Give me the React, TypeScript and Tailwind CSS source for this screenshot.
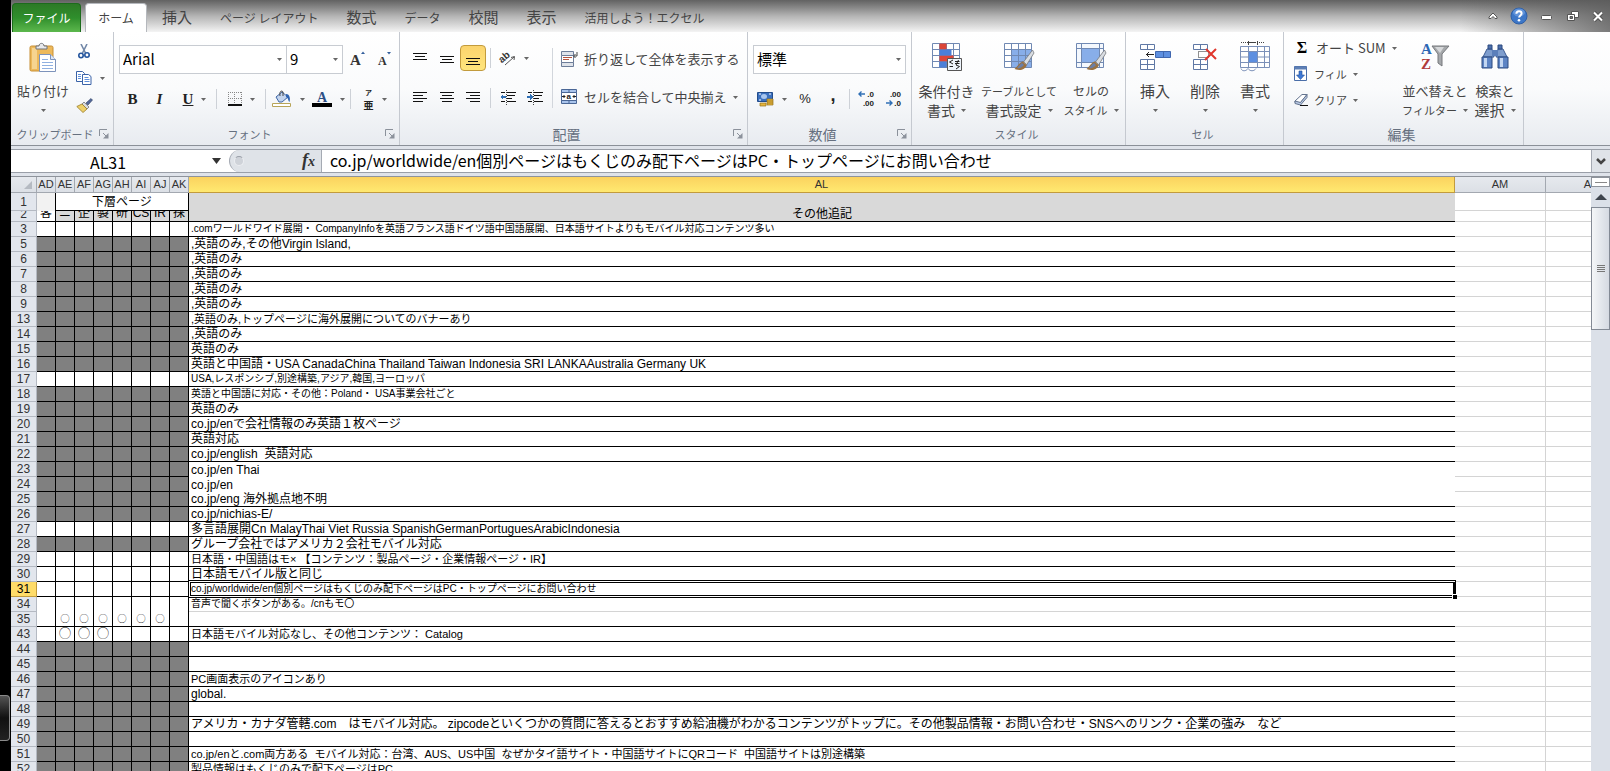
import type { ReactNode } from "react";
import { clsx } from "clsx";

const UI_FONT = "font-['Noto_Sans_CJK_JP',sans-serif]";
const CELL_FONT = "font-['Liberation_Sans','Noto_Sans_CJK_JP',sans-serif]";

type Size = "sm" | "md" | "base";

type Row = {
  n: number;
  text?: string;
  size?: Size;
  filled?: boolean;
  line?: "black" | "gray" | "none";
  marks?: number;
  openCells?: boolean;
};

const TEXT_SIZE: Record<Size, string> = {
  sm: "text-[10px]",
  md: "text-[11px]",
  base: "text-xs",
};

const SMALL_COLUMNS = ["AD", "AE", "AF", "AG", "AH", "AI", "AJ", "AK"];
const SUB_HEADINGS = ["客", "ニ", "企", "製", "研", "CS", "IR", "採"];

const ROWS: Row[] = [
  {
    n: 3,
    text: ".comワールドワイド展開・ CompanyInfoを英語フランス語ドイツ語中国語展開、日本語サイトよりもモバイル対応コンテンツ多い",
    size: "sm",
  },
  { n: 5, text: ",英語のみ,その他Virgin Island,", filled: true },
  { n: 6, text: ",英語のみ", filled: true },
  { n: 7, text: ",英語のみ", filled: true },
  { n: 8, text: ",英語のみ", filled: true },
  { n: 9, text: ",英語のみ", filled: true },
  { n: 13, text: ",英語のみ,トップページに海外展開についてのバナーあり", size: "md", filled: true },
  { n: 14, text: ",英語のみ", filled: true },
  { n: 15, text: "英語のみ", filled: true },
  {
    n: 16,
    text: "英語と中国語・USA CanadaChina Thailand Taiwan Indonesia SRI LANKAAustralia Germany UK",
    filled: true,
  },
  { n: 17, text: "USA,レスポンシブ,別途構築,アジア,韓国,ヨーロッパ", size: "sm" },
  { n: 18, text: "英語と中国語に対応・その他：Poland・ USA事業会社ごと", size: "sm", filled: true },
  { n: 19, text: "英語のみ", filled: true },
  { n: 20, text: "co.jp/enで会社情報のみ英語１枚ページ", filled: true },
  { n: 21, text: "英語対応", filled: true },
  { n: 22, text: "co.jp/english  英語対応", filled: true },
  { n: 23, text: "co.jp/en Thai", filled: true, line: "none" },
  { n: 24, text: "co.jp/en", filled: true, line: "none" },
  { n: 25, text: "co.jp/eng 海外拠点地不明", filled: true },
  { n: 26, text: "co.jp/nichias-E/", filled: true },
  { n: 27, text: "多言語展開Cn MalayThai Viet Russia SpanishGermanPortuguesArabicIndonesia" },
  { n: 28, text: "グループ会社ではアメリカ２会社モバイル対応", filled: true },
  { n: 29, text: "日本語・中国語はモ× 【コンテンツ：製品ページ・企業情報ページ・IR】", size: "md" },
  { n: 30, text: "日本語モバイル版と同じ" },
  {
    n: 31,
    text: "co.jp/worldwide/en個別ページはもくじのみ配下ページはPC・トップページにお問い合わせ",
    size: "sm",
  },
  { n: 34, text: "音声で聞くボタンがある。/cnもモ〇", size: "sm", line: "gray", openCells: true },
  { n: 35, marks: 6 },
  { n: 43, text: "日本語モバイル対応なし、その他コンテンツ： Catalog", size: "md", marks: 3 },
  { n: 44, filled: true },
  { n: 45, filled: true },
  { n: 46, text: "PC画面表示のアイコンあり", size: "md", filled: true },
  { n: 47, text: "global.", filled: true },
  { n: 48, filled: true },
  {
    n: 49,
    text: "アメリカ・カナダ管轄.com　はモバイル対応。 zipcodeといくつかの質問に答えるとおすすめ給油機がわかるコンテンツがトップに。その他製品情報・お問い合わせ・SNSへのリンク・企業の強み　など",
    filled: true,
  },
  { n: 50, filled: true },
  {
    n: 51,
    text: "co.jp/enと.com両方ある  モバイル対応：台湾、AUS、US中国  なぜかタイ語サイト・中国語サイトにQRコード  中国語サイトは別途構築",
    size: "md",
    filled: true,
  },
  { n: 52, text: "製品情報はもくじのみで配下ページはPC", size: "md", filled: true },
];

const SELECTED_ROW = 31;

export default function App() {
  return (
    <div className={clsx("flex h-screen overflow-hidden bg-black text-[#444]", UI_FONT)}>
      <aside className="flex w-[11px] shrink-0 flex-col justify-end pb-[30px]">
        <div className="h-[46px] w-[10px] rounded-r-sm border border-l-0 border-[#8a8a8a] bg-linear-to-b from-[#555] via-[#111] to-[#222]" />
      </aside>
      <div className="flex min-w-0 flex-1 flex-col bg-[#dfe3ea]">
        <TabBar />
        <Ribbon />
        <FormulaBar />
        <div className="flex min-h-0 flex-1 border-t border-[#8e939b]">
          <Sheet />
          <ScrollBar />
        </div>
      </div>
    </div>
  );
}

function TabBar() {
  const tabs = [
    { label: "挿入", kanji: true },
    { label: "ページ レイアウト" },
    { label: "数式", kanji: true },
    { label: "データ" },
    { label: "校閲", kanji: true },
    { label: "表示", kanji: true },
    { label: "活用しよう！エクセル" },
  ];
  return (
    <header className="flex h-8 shrink-0 items-end bg-linear-to-b from-[#626262] via-[#b4b4b4] to-[#f4f4f4]">
      <button className="ml-px h-[29px] w-[69px] rounded-t-sm border border-b-0 border-[#1c6b1c] bg-linear-to-b from-[#2c7a26] via-[#2f8f2c] to-[#5cb84d] text-xs text-white">
        ファイル
      </button>
      <button className="ml-1 h-[29px] w-[62px] rounded-t border border-b-0 border-[#b5b8bd] bg-white text-xs text-[#444]">
        ホーム
      </button>
      <nav className="ml-[15px] flex h-[29px] items-center gap-7">
        {tabs.map((t) => (
          <button
            key={t.label}
            className={clsx("whitespace-nowrap text-[#444]", t.kanji ? "text-[15px]" : "text-xs")}
          >
            {t.label}
          </button>
        ))}
      </nav>
      <div className="ml-auto flex h-full w-[150px] items-center justify-end gap-3 bg-linear-to-r from-transparent to-[#5c5c5c]/80 pr-[6px]">
        <button aria-label="リボンの最小化">
          <svg width="10" height="8" viewBox="0 0 10 8">
            <path d="M1 5 5 1l4 4v1.500H7L5 4.500l-2 2H1z" fill="#fff" stroke="#555" />
          </svg>
        </button>
        <button aria-label="ヘルプ">
          <svg width="18" height="18" viewBox="0 0 18 18">
            <circle cx="9" cy="9" r="8" fill="#3d77c8" stroke="#2f5fa5" />
            <ellipse cx="9" cy="5.500" rx="6" ry="4" fill="#79a7e4" opacity=".6" />
            <path d="M6.400 6.800c0-3.400 5.200-3.200 5.200-.2 0 1.800-2.500 1.900-2.500 4" fill="none" stroke="#fff" strokeWidth="2" />
            <circle cx="9" cy="13.200" r="1.300" fill="#fff" />
          </svg>
        </button>
        <button aria-label="最小化">
          <svg width="14" height="12" viewBox="0 0 14 12">
            <rect x="1.500" y="5.500" width="10" height="4" rx="1" fill="#fff" stroke="#555" />
          </svg>
        </button>
        <button aria-label="元に戻す">
          <svg width="14" height="12" viewBox="0 0 14 12" fill="#fff" stroke="#555">
            <path d="M5.500 1.500h7v6h-7z" />
            <path d="M1.500 4.500h7v6h-7z" />
            <path d="M4 6.500h2.500v2H4z" fill="#777" />
          </svg>
        </button>
        <button aria-label="閉じる">
          <svg width="12" height="11" viewBox="0 0 12 11">
            <path d="m2 1.500 8 8m0-8-8 8" stroke="#555" strokeWidth="4" />
            <path d="m2 1.500 8 8m0-8-8 8" stroke="#fff" strokeWidth="2" />
          </svg>
        </button>
      </div>
    </header>
  );
}

function Caret({ className }: { className?: string }) {
  return (
    <svg width="5" height="3" viewBox="0 0 5 3" className={clsx("shrink-0", className)}>
      <path d="M0 0h5L2.500 3z" fill="#666" />
    </svg>
  );
}

function Divider({ className }: { className?: string }) {
  return <span className={clsx("h-5 w-px shrink-0 bg-[#cdd1d7]", className)} />;
}

function Tool({
  label,
  width,
  caret,
  active,
  children,
}: {
  label: string;
  width: string;
  caret?: boolean;
  active?: boolean;
  children: ReactNode;
}) {
  return (
    <button
      aria-label={label}
      className={clsx(
        "flex h-[26px] shrink-0 items-center justify-center gap-2",
        width,
        active && "rounded-sm border border-[#c29b3d] bg-linear-to-b from-[#fbd46d] to-[#ffe57c]",
      )}
    >
      {children}
      {caret && <Caret />}
    </button>
  );
}

function Group({
  label,
  kana,
  width,
  launcher,
  children,
}: {
  label: string;
  kana?: boolean;
  width: string;
  launcher?: boolean;
  children: ReactNode;
}) {
  return (
    <section className={clsx("flex shrink-0 flex-col border-r border-[#c5c9d0]", width)}>
      <div className="h-[92px]">{children}</div>
      <footer className="flex h-5 items-center pr-1 text-[#66707f]">
        <span
          className={clsx("flex-1 whitespace-nowrap text-center", kana ? "text-[11px]" : "text-sm")}
        >
          {label}
        </span>
        {launcher && (
          <button aria-label={`${label}の設定`}>
            <svg width="10" height="10" viewBox="0 0 10 10" fill="none" stroke="#8b919b">
              <path d="M.5 7V.5H8M4 4l4 4" />
              <path d="M9.500 4v5.500H4z" fill="#8b919b" stroke="none" />
            </svg>
          </button>
        )}
      </footer>
    </section>
  );
}

function Combo({ label, value, className }: { label: string; value: string; className: string }) {
  return (
    <div className={clsx("relative h-[29px] border border-[#c8ccd2] bg-white", className)}>
      <select
        aria-label={label}
        className="h-full w-full appearance-none bg-transparent pl-[3px] text-[15px] text-black"
      >
        <option>{value}</option>
      </select>
      <Caret className="pointer-events-none absolute right-1 top-3" />
    </div>
  );
}

function Lines({ widths, top = 0 }: { widths: [number, number][]; top?: number }) {
  return (
    <svg width="16" height="16" viewBox="0 0 16 16" stroke="#111" shapeRendering="crispEdges">
      {widths.map(([x, w], i) => (
        <path key={i} d={`M${x} ${top + i * 3 + 0.5}h${w}`} />
      ))}
    </svg>
  );
}

const FULL: [number, number][] = [
  [1, 14],
  [3, 10],
  [1, 14],
];

function Indent({ right }: { right?: boolean }) {
  return (
    <svg width="16" height="16" viewBox="0 0 16 16" shapeRendering="crispEdges">
      <path d="M1 2.500h4M7 2.500h9M7 5.500h8M7 8.500h5M1 11.500h4M7 11.500h9" stroke="#111" strokeWidth="1.500" />
      <path d="M6.500 0v15" stroke="#444" strokeDasharray="1 1" />
      <path d={right ? "M3 4v6l3-3zM0 6h3v2H0z" : "M3 4v6L0 7zM3 6h3v2H3z"} fill="#2f6fb5" />
    </svg>
  );
}

function BigButton({
  icon,
  lines,
  width,
}: {
  icon: ReactNode;
  lines: { text: string; size: string }[];
  width: string;
}) {
  const single = lines.length === 1;
  return (
    <button className={clsx("flex shrink-0 flex-col items-center pt-2", width)}>
      <span className="flex h-[34px] items-center">{icon}</span>
      <span className={clsx("mt-[7px] h-5 whitespace-nowrap leading-5", lines[0].size)}>
        {lines[0].text}
      </span>
      {single ? (
        <Caret className="mt-2" />
      ) : (
        <span className={clsx("flex h-[18px] items-center gap-[6px] whitespace-nowrap", lines[1].size)}>
          {lines[1].text}
          <Caret />
        </span>
      )}
    </button>
  );
}

function GridIcon({ children, blue }: { children?: ReactNode; blue?: string }) {
  return (
    <svg width="32" height="32" viewBox="0 0 32 32">
      <path d="M1.500 2.500h27v24h-27z" fill="#fff" />
      {blue && <path d={blue} fill="#88aee9" />}
      <path
        d="M1.500 2.500h27v24h-27zM1.500 8.500h27M1.500 14.500h27M1.500 20.500h27M8.500 2.500v24M15.500 2.500v24M22.500 2.500v24"
        fill="none"
        stroke="#7089b3"
      />
      {children}
    </svg>
  );
}

function Brush() {
  return (
    <g>
      <path d="m29.500 9-9 12 3 3 7.500-12z" fill="#d9dde2" stroke="#76787c" strokeWidth=".8" />
      <path d="m20 20 4 4-2.500 3z" fill="#b9bec6" stroke="#777" strokeWidth=".6" />
      <path d="M19.500 20.500c-3 1-4 4-8 7.500 5 2 11 1 12-4z" fill="#9a7141" />
      <path d="M19 22c-2 1-3 3-5 5 3 .5 5-.5 7-3z" fill="#6a7fa8" />
    </g>
  );
}

function Ribbon() {
  return (
    <div className="flex h-[114px] shrink-0 overflow-hidden border-b border-[#8b9098] bg-linear-to-b from-white via-[#fafbfc] to-[#e8ebf0]">
      <Group label="クリップボード" kana width="w-[103px]" launcher>
        <div className="flex">
          <BigButton
            width="w-16"
            lines={[{ text: "貼り付け", size: "text-[13px]" }]}
            icon={
              <svg width="28" height="31" viewBox="0 0 28 31">
                <rect x="1" y="4" width="23" height="25" rx="1.500" fill="#edb95b" stroke="#c78f35" />
                <path d="M3 6h5v21H3z" fill="#f6d490" />
                <path d="M7 7V4h3c0-3.500 5-3.500 5 0h3v3z" fill="#e7e9ec" stroke="#6f7379" />
                <path d="M10.500 12.500h11l5 5v12h-16z" fill="#fff" stroke="#7d93bb" />
                <path d="M21.500 12.500v5h5" fill="#dce6f5" stroke="#7d93bb" />
                <path d="M13 17.500h6M13 20.500h11M13 23.500h11M13 26.500h11" stroke="#8fb0e0" />
              </svg>
            }
          />
          <div className="flex flex-col gap-px pt-[6px]">
            <Tool label="切り取り" width="w-[18px]">
              <svg width="12" height="15" viewBox="0 0 12 15" fill="none">
                <path d="M3 0l4.500 9M9 0 4.500 9" stroke="#7288a8" strokeWidth="1.600" />
                <circle cx="3" cy="11.500" r="2.200" stroke="#24559e" strokeWidth="1.600" />
                <circle cx="9" cy="11" r="2.200" stroke="#24559e" strokeWidth="1.600" />
              </svg>
            </Tool>
            <Tool label="コピー" width="w-[30px]" caret>
              <svg width="16" height="14" viewBox="0 0 16 14" fill="#fff" stroke="#3a63a8">
                <path d="M.5.500h6l2 2v8h-8z" />
                <path d="M6.500 3.500h6l2.500 2v8H6.500z" />
                <path d="M2 3.500h3M2 5.500h3M2 7.500h3M8.500 6.500h4M8.500 8.500h5M8.500 10.500h5" stroke="#5e8fdb" />
              </svg>
            </Tool>
            <Tool label="書式のコピー" width="w-[18px]">
              <svg width="17" height="15" viewBox="0 0 17 15">
                <path d="m10 5 5-4.500L16.500 2 12 7z" fill="#53689a" stroke="#2e3c60" strokeWidth=".6" />
                <path d="m8 4 5 5-2 2-5-5z" fill="#d8dbe0" stroke="#666" strokeWidth=".7" />
                <path d="M6 6 .8 8.500 7 14.500l4-3.500z" fill="#edd06a" stroke="#9b7c26" strokeWidth=".8" />
              </svg>
            </Tool>
          </div>
        </div>
      </Group>

      <Group label="フォント" kana width="w-[286px]" launcher>
        <div className="flex items-center pl-[5px] pt-[13px]">
          <Combo label="フォント名" value="Arial" className="w-[168px]" />
          <Combo label="フォント サイズ" value="9" className="w-14 border-l-0" />
          <Tool label="拡大" width="w-[29px]">
            <svg width="18" height="20" viewBox="0 0 18 20">
              <text x="1" y="15" fontSize="15" fontWeight="700" fontFamily="Liberation Serif, serif" fill="#333">A</text>
              <path d="m12 4 2-2.500L16 4z" fill="#335f9c" />
            </svg>
          </Tool>
          <Tool label="縮小" width="w-[25px]">
            <svg width="16" height="20" viewBox="0 0 16 20">
              <text x="1" y="15" fontSize="12" fontWeight="700" fontFamily="Liberation Serif, serif" fill="#333">A</text>
              <path d="m10 2 2 2.500L14 2z" fill="#335f9c" />
            </svg>
          </Tool>
        </div>
        <div className="flex items-center pl-[5px] pt-3 font-['Liberation_Serif',serif] text-base text-[#222]">
          <Tool label="太字" width="w-[27px]"><b className="text-[15px]">B</b></Tool>
          <Tool label="斜体" width="w-[27px]"><b className="text-[15px] italic">I</b></Tool>
          <Tool label="下線" width="w-[43px]" caret><b className="text-[15px] underline">U</b></Tool>
          <Divider />
          <Tool label="罫線" width="w-12" caret>
            <svg width="14" height="14" viewBox="0 0 14 14" shapeRendering="crispEdges">
              <path d="M0 .5h14M0 6.500h14M.5 0v13M6.500 0v13M13.500 0v13" stroke="#888" strokeDasharray="1 1" />
              <path d="M0 13h14" stroke="#111" strokeWidth="1.500" />
            </svg>
          </Tool>
          <Divider />
          <Tool label="塗りつぶしの色" width="w-11" caret>
            <svg width="20" height="18" viewBox="0 0 20 18">
              <path d="m4 7 6-5 6 5-6 5H7z" fill="#c3d4ee" stroke="#3f66a5" />
              <path d="M8 6c-1-5 2-6 3-4v4" fill="none" stroke="#444" />
              <path d="M14 4c4 0 4.500 5 3.500 8-1.500-1-1-4-3.500-5z" fill="#2e62b0" />
              <path d="M.5 13.500h18v3H.5z" fill="#fff" stroke="#b8a558" />
            </svg>
          </Tool>
          <Tool label="フォントの色" width="w-9" caret>
            <svg width="20" height="18" viewBox="0 0 20 18">
              <text x="5" y="12" fontSize="14" fontWeight="700" fontFamily="Liberation Serif, serif" fill="#2d4f86">A</text>
              <path d="M0 13h20v4H0z" fill="#000" />
            </svg>
          </Tool>
          <Divider className="ml-1" />
          <Tool label="ふりがな" width="w-12" caret>
            <span className={clsx("flex flex-col items-center font-bold", UI_FONT)}>
              <span className="text-[7px] leading-[10px]">ア</span>
              <span className="text-[10px] leading-[15px]">亜</span>
            </span>
          </Tool>
        </div>
      </Group>

      <Group label="配置" width="w-[348px]" launcher>
        <div className="flex">
          <div className="w-[152px] shrink-0 pl-[6px]">
            <div className="flex items-center pt-[13px]">
              <Tool label="上揃え" width="w-[27px]"><Lines widths={FULL} top={3} /></Tool>
              <Tool label="上下中央揃え" width="w-[27px]"><Lines widths={FULL} top={6} /></Tool>
              <Tool label="下揃え" width="w-[26px]" active><Lines widths={FULL} top={8} /></Tool>
              <Divider className="ml-1" />
              <Tool label="方向" width="w-[44px]" caret>
                <svg width="18" height="20" viewBox="0 0 18 20">
                  <text x="1" y="12" fontSize="10" fontWeight="700" fontFamily="Liberation Sans, sans-serif" fill="#333" transform="rotate(-40 7 10)">ab</text>
                  <path d="m7 17 9-8m-3 .5 3.500-1-.5 3.500" fill="none" stroke="#555" />
                </svg>
              </Tool>
            </div>
            <div className="flex items-center pt-[14px]">
              <Tool label="左揃え" width="w-[27px]">
                <Lines widths={[[1, 14], [1, 10], [1, 14], [1, 10]]} top={2} />
              </Tool>
              <Tool label="中央揃え" width="w-[27px]">
                <Lines widths={[[1, 14], [3, 10], [1, 14], [3, 10]]} top={2} />
              </Tool>
              <Tool label="右揃え" width="w-[26px]">
                <Lines widths={[[1, 14], [5, 10], [1, 14], [5, 10]]} top={2} />
              </Tool>
              <Divider className="ml-1" />
              <Tool label="インデントを減らす" width="w-[34px]"><Indent /></Tool>
              <Tool label="インデントを増やす" width="w-[20px]"><Indent right /></Tool>
            </div>
          </div>
          <div className="mt-4 h-[60px] w-px bg-[#d2d6dc]" />
          <div className="flex flex-col gap-3 pl-2 pt-[14px] text-[13px]">
            <button className="flex h-[26px] items-center gap-[6px] whitespace-nowrap">
              <svg width="17" height="16" viewBox="0 0 17 16">
                <path d="M.5.500h12v4H.5zM.5 11.500h12v4H.5z" fill="#dfe3ea" stroke="#6d7d99" />
                <path d="M.5 4.500h12v7H.5z" fill="#fff" stroke="#6d7d99" />
                <path d="M2 6.500h9M2 8.500h6" stroke="#b5533f" />
                <path d="M16 1v4h-3m1.500-2-2 2 2 2" fill="none" stroke="#444" />
              </svg>
              折り返して全体を表示する
            </button>
            <button className="flex h-[26px] items-center gap-[6px] whitespace-nowrap">
              <svg width="17" height="16" viewBox="0 0 17 16">
                <path d="M.5.500h15v14H.5z" fill="#a9c4ec" stroke="#4a6796" />
                <path d="M.5 3.500h15v8H.5z" fill="#fff" stroke="#4a6796" />
                <path d="M8 .5v3M8 11.500v3" stroke="#4a6796" />
                <path d="M1 7.500h3m8 0h3M2.500 6 4 7.500 2.500 9m11-3L12 7.500 13.500 9" fill="none" stroke="#222" />
                <text x="5.500" y="10" fontSize="8" fontWeight="700" fontFamily="Liberation Sans, sans-serif" fill="#222">a</text>
              </svg>
              セルを結合して中央揃え
              <Caret />
            </button>
          </div>
        </div>
      </Group>

      <Group label="数値" width="w-[164px]" launcher>
        <div className="px-[5px] pt-[13px]">
          <Combo label="表示形式" value="標準" className="w-full" />
          <div className="flex items-center pt-3 font-['Liberation_Sans',sans-serif] text-[#222]">
            <Tool label="通貨表示形式" width="w-[38px]" caret>
              <svg width="17" height="16" viewBox="0 0 17 16">
                <path d="M.5 1.500h15v9H.5z" fill="#3b70be" stroke="#224c8c" />
                <ellipse cx="7" cy="5.500" rx="3" ry="2.500" fill="#a9c6ee" />
                <path d="M2 3h2m8 0h2M2 9h2" stroke="#fff" />
                <path d="M10 8h6v6h-6z" fill="#e6b53d" stroke="#93701a" strokeWidth=".7" />
                <path d="M10 10h6M10 12h6" stroke="#93701a" strokeWidth=".7" />
                <path d="M3 12h6v3H3z" fill="#e6b53d" stroke="#93701a" strokeWidth=".7" />
              </svg>
            </Tool>
            <Tool label="パーセント" width="w-[28px]"><span className="text-[13px]">%</span></Tool>
            <Tool label="桁区切り" width="w-[28px]"><b className="pb-2 text-lg leading-none">,</b></Tool>
            <Divider className="mx-[2px]" />
            <Tool label="小数点以下の桁数を増やす" width="w-[28px]">
              <DecimalIcon top=".0" bottom=".00" />
            </Tool>
            <Tool label="小数点以下の桁数を減らす" width="w-[26px]">
              <DecimalIcon top=".00" bottom=".0" down />
            </Tool>
          </div>
        </div>
      </Group>

      <Group label="スタイル" kana width="w-[214px]">
        <div className="flex pl-px">
          <BigButton
            width="w-[67px]"
            lines={[{ text: "条件付き", size: "text-sm" }, { text: "書式", size: "text-sm" }]}
            icon={
              <GridIcon>
                <path d="M8.500 2.500h7v6h-7zM8.500 14.500h14v6h-14z" fill="#dc4638" />
                <path d="M8.500 8.500h12v6h-12zM8.500 20.500h7v6h-7z" fill="#4b7fd8" />
                <path d="M16.500 17.500h14v12h-14z" fill="#eef4fb" stroke="#555" />
                <path d="m22 19-3.500 2 3.500 2m-3.500 2.500H22M24 20.500h4.500M24 22.500h4.500m-1-3.500L25 24m0 0 3.500 1.500L25 28" fill="none" stroke="#222" />
              </GridIcon>
            }
          />
          <BigButton
            width="w-[78px]"
            lines={[{ text: "テーブルとして", size: "text-[11px]" }, { text: "書式設定", size: "text-sm" }]}
            icon={<GridIcon blue="M8.500 8.500h20v18h-20z"><Brush /></GridIcon>}
          />
          <BigButton
            width="w-[66px]"
            lines={[{ text: "セルの", size: "text-xs" }, { text: "スタイル", size: "text-[11px]" }]}
            icon={
              <svg width="32" height="32" viewBox="0 0 32 32">
                <path d="M1.500 2.500h27v24h-27z" fill="#f4f8fd" stroke="#7089b3" />
                <path d="M6.500 7.500h18v14h-18z" fill="#88aee9" />
                <path d="M1.500 7.500h27M1.500 21.500h27M6.500 2.500v24M24.500 2.500v24" stroke="#7089b3" />
                <Brush />
              </svg>
            }
          />
        </div>
      </Group>

      <Group label="セル" kana width="w-[158px]">
        <div className="flex pl-1">
          <BigButton
            width="w-[50px]"
            lines={[{ text: "挿入", size: "text-[15px]" }]}
            icon={
              <svg width="32" height="30" viewBox="0 0 32 30" fill="#fff" stroke="#5f78a5">
                <path d="M1.500 2.500h14v5h-14zM8.500 2.500v5M1.500 17.500h14v10h-14zM8.500 17.500v10M1.500 22.500h14" />
                <path d="M16.500 9.500h15v6h-15zM24.500 9.500v6" fill="#5d8fe0" stroke="#3f66ae" />
                <path d="M15 12.500H7m3-2.500-2.500 2.500L10 15" fill="none" stroke="#222" />
              </svg>
            }
          />
          <BigButton
            width="w-[50px]"
            lines={[{ text: "削除", size: "text-[15px]" }]}
            icon={
              <svg width="28" height="30" viewBox="0 0 28 30" fill="#fff" stroke="#5f78a5">
                <path d="M2.500 2.500h14v5h-14zM9.500 2.500v5M2.500 17.500h14v10h-14zM9.500 17.500v10M2.500 22.500h14" />
                <path d="M7.500 9.500h10v6h-10z" fill="none" stroke="#222" strokeDasharray="1 1" />
                <path d="m15 7 10 10M25 7 14 18" stroke="#e0362c" strokeWidth="2" />
              </svg>
            }
          />
          <BigButton
            width="w-[50px]"
            lines={[{ text: "書式", size: "text-[15px]" }]}
            icon={
              <svg width="32" height="32" viewBox="0 0 32 32">
                <path d="M1.500 5.500h29v21h-29z" fill="#fff" />
                <path d="M9.500 10.500h9v11h-9z" fill="#5d8fe0" />
                <path d="M1.500 5.500h29v21h-29zM1.500 10.500h29M1.500 21.500h29M1.500 16h8M18.500 16h12M9.500 5.500v21M18.500 5.500v21M25.500 5.500v21" fill="none" stroke="#7b90b8" />
                <path d="M2 1.500h7M10 1.500h16" stroke="#444" strokeDasharray="1 1" />
                <path d="M9.500 0v4M18.500 0v4M11 1.500h6" stroke="#444" />
                <path d="M2 27.500c1 3 5 3 7 0 2 3 6 3 8 0" fill="#fff" stroke="#7b90b8" />
              </svg>
            }
          />
        </div>
      </Group>

      <Group label="編集" width="w-[240px]">
        <div className="flex">
          <div className="flex w-[118px] shrink-0 flex-col gap-[2px] pl-[10px] pt-1 text-[11px]">
            <button className="flex h-6 items-center gap-[6px] whitespace-nowrap text-[13px]">
              <b className="w-4 text-center font-['Liberation_Serif',serif] text-base text-black">Σ</b>
              <span>オート SUM</span>
              <Caret />
            </button>
            <button className="flex h-6 items-center gap-[6px]">
              <svg width="14" height="16" viewBox="0 0 14 16">
                <path d="M.5.500h12v14H.5z" fill="#fff" stroke="#4a6ea8" />
                <path d="M.5.500h12v3H.5z" fill="#5d7fb5" />
                <path d="M5 5h3v4h2.500l-4 4.500-4-4.500H5z" fill="#3d78d6" stroke="#244f95" strokeWidth=".6" />
              </svg>
              <span>フィル</span>
              <Caret />
            </button>
            <button className="flex h-6 items-center gap-[6px]">
              <svg width="14" height="14" viewBox="0 0 14 14">
                <path d="m1 8 7-6.500h5L6.500 9.500H1z" fill="#fff" stroke="#64748f" />
                <path d="M1 8v2.500L6.500 12l6.500-7.500v-3L6.500 9.500z" fill="#b9c9e4" stroke="#64748f" />
                <path d="M6 12.500h8" stroke="#111" />
              </svg>
              <span>クリア</span>
              <Caret />
            </button>
          </div>
          <BigButton
            width="w-[66px]"
            lines={[{ text: "並べ替えと", size: "text-[13px]" }, { text: "フィルター", size: "text-[11px]" }]}
            icon={
              <svg width="32" height="34" viewBox="0 0 32 34" fontFamily="Liberation Serif, serif" fontWeight="700">
                <path d="M13 6h17l-7 8v12l-4-3V14z" fill="#a5a8ab" stroke="#76797d" />
                <path d="M16 7h9l-4 6z" fill="#d6d8da" />
                <text x="2" y="14" fontSize="15" fill="#2c67b4">A</text>
                <text x="2" y="29" fontSize="15" fill="#b03a3a">Z</text>
              </svg>
            }
          />
          <BigButton
            width="w-[54px]"
            lines={[{ text: "検索と", size: "text-[13px]" }, { text: "選択", size: "text-[15px]" }]}
            icon={
              <svg width="30" height="28" viewBox="0 0 30 28">
                <path d="M7 6h5l2 8H3zM18 6h5l4 8H16z" fill="#7e9dcd" stroke="#3a5a92" />
                <path d="M8 2h4v4H8zM18 2h4v4h-4z" fill="#4d71ad" stroke="#2c4a80" />
                <path d="M12 7h6v6h-6z" fill="#5b7fba" />
                <path d="M2 14h10v11H2zM18 14h10v11H18z" fill="#5d84c4" stroke="#2c4a80" />
                <path d="M4 15h3v9H4zM20 15h3v9h-3z" fill="#c3d6f1" />
              </svg>
            }
          />
        </div>
      </Group>
    </div>
  );
}

function DecimalIcon({ top, bottom, down }: { top: string; bottom: string; down?: boolean }) {
  return (
    <svg width="17" height="20" viewBox="0 0 17 20" fontFamily="Liberation Sans, sans-serif" fontSize="8" fontWeight="700" fill="#222">
      <text x="16" y="8" textAnchor="end">{top}</text>
      <text x="16" y="17" textAnchor="end">{bottom}</text>
      <path
        d={down ? "M1 14h6m-2.500-2.500L7 14l-2.500 2.500" : "M7 5H1m2.500-2.500L1 5l2.500 2.500"}
        fill="none"
        stroke="#2f6fb5"
        strokeWidth="1.400"
      />
    </svg>
  );
}

function FormulaBar() {
  return (
    <div className="my-[3px] flex h-6 shrink-0 border-y border-[#9a9fa8] bg-white">
      <div className="relative w-[218px] shrink-0">
        <input
          aria-label="名前ボックス"
          defaultValue="AL31"
          className="h-full w-full pb-[2px] pr-6 text-center text-base text-black outline-none"
        />
        <svg width="9" height="6" viewBox="0 0 9 6" className="absolute right-2 top-2">
          <path d="M0 0h9L4.500 6z" fill="#333" />
        </svg>
      </div>
      <div className="flex w-[93px] shrink-0 items-center justify-between rounded-l-full border-l border-r border-[#a5aab3] bg-[#dfe3e8] pl-1 pr-[6px]">
        <span className="size-[10px] rounded-full border border-t-[#9a9fa8] border-[#eceef1] bg-[#cfd3d9]" />
        <button aria-label="関数の挿入" className="font-['Liberation_Serif',serif] text-lg font-bold italic leading-5 text-[#333]">
          f<span className="text-sm">x</span>
        </button>
      </div>
      <input
        aria-label="数式バー"
        defaultValue="co.jp/worldwide/en個別ページはもくじのみ配下ページはPC・トップページにお問い合わせ"
        className="min-w-0 flex-1 pb-[2px] pl-2 text-base text-black outline-none"
      />
      <button
        aria-label="数式バーの展開"
        className="flex w-[19px] shrink-0 items-center justify-center border-l border-[#a5aab3] bg-[#dfe3e8]"
      >
        <svg width="10" height="7" viewBox="0 0 10 7">
          <path d="m1 1 4 4 4-4" fill="none" stroke="#444" strokeWidth="2.500" />
        </svg>
      </button>
    </div>
  );
}

function Sheet() {
  return (
    <div className={clsx("min-w-0 flex-1 overflow-hidden bg-white", CELL_FONT)}>
      <table className="w-full table-fixed border-separate border-spacing-0 text-black">
        <colgroup>
          <col className="w-[26px]" />
          {SMALL_COLUMNS.map((c) => (
            <col key={c} className="w-[19px]" />
          ))}
          <col />
          <col className="w-[91px]" />
          <col className="w-[45px]" />
        </colgroup>
        <thead>
          <tr className="h-4 bg-linear-to-b from-[#e6e9ee] to-[#dbdfe5] text-[11px] leading-[15px] text-[#333]">
            <th className="border-b border-r border-[#a3a8b0] p-0">
              <svg width="8" height="8" viewBox="0 0 8 8" className="ml-auto mr-1">
                <path d="M8 0v8H0z" fill="#b5bac2" />
              </svg>
            </th>
            {SMALL_COLUMNS.map((c) => (
              <th key={c} className="border-b border-r border-[#a3a8b0] p-0 font-normal">
                {c}
              </th>
            ))}
            <th className="border-b border-r border-[#c29b3d] bg-linear-to-b from-[#fbd25f] to-[#ffe970] p-0 font-normal">
              AL
            </th>
            <th className="border-b border-r border-[#a3a8b0] p-0 font-normal">AM</th>
            <th className="border-b border-[#a3a8b0] p-0 text-right font-normal">A</th>
          </tr>
        </thead>
        <tbody>
          <tr className="h-[18px]">
            <RowHeader n={1} />
            <td className="border-r border-black bg-[#f2f2f2] p-0" />
            <td colSpan={7} className="border-b border-r border-black p-0 text-center text-xs leading-4">
              下層ページ
            </td>
            <td
              rowSpan={2}
              className="border-b border-black bg-[#d9d9d9] p-0 text-center align-bottom text-xs leading-[14px]"
            >
              その他追記
            </td>
            <EmptyCells />
          </tr>
          <tr className="h-[11px]">
            <RowHeader n={2} short />
            {SUB_HEADINGS.map((h, i) => (
              <td
                key={h}
                className={clsx("border-b border-r border-black p-0", i > 0 && "bg-[#d9d9d9]")}
              >
                <div className="flex h-[10px] items-end justify-center overflow-hidden text-xs leading-4">
                  {h}
                </div>
              </td>
            ))}
            <EmptyCells />
          </tr>
          {ROWS.map((r) => (
            <SheetRow key={r.n} row={r} />
          ))}
        </tbody>
      </table>
    </div>
  );
}

function RowHeader({ n, short }: { n: number; short?: boolean }) {
  const selected = n === SELECTED_ROW;
  return (
    <th
      className={clsx(
        "border-b border-r p-0 text-xs font-normal",
        selected ? "border-[#c29b3d] bg-[#ffdc69]" : "border-[#b4b9c2] bg-[#e2e6ed] text-[#333]",
      )}
    >
      <div
        className={clsx(
          "flex items-end justify-center overflow-hidden leading-[14px]",
          short ? "h-[10px]" : "h-[14px]",
        )}
      >
        {n}
      </div>
    </th>
  );
}

function EmptyCells() {
  return (
    <>
      <td className="border-b border-r border-[#d4d4d4] p-0" />
      <td className="border-b border-[#d4d4d4] p-0" />
    </>
  );
}

function SheetRow({ row }: { row: Row }) {
  const { n, text, size = "base", filled, line = "black", marks = 0, openCells } = row;
  return (
    <tr className="h-[15px]">
      <RowHeader n={n} />
      {SMALL_COLUMNS.map((c, i) => (
        <td
          key={c}
          className={clsx(
            "border-r border-black p-0",
            !openCells && "border-b",
            filled && "bg-[#808080]",
          )}
        >
          {i > 0 && i <= marks && (
            <div
              className={clsx(
                "flex h-[14px] items-center justify-center leading-[14px]",
                marks > 3 ? "text-[9px]" : "text-xs",
              )}
            >
              ◯
            </div>
          )}
        </td>
      ))}
      <td
        className={clsx(
          "relative p-0",
          line === "black" && "border-b border-black",
          line === "gray" && "border-b border-[#d4d4d4]",
        )}
      >
        {n === SELECTED_ROW && (
          <div className="pointer-events-none absolute -inset-x-px -bottom-[2px] -top-[2px] border-[3px] border-double border-black bg-white [border-right-style:solid]">
            <span className="absolute -bottom-[4px] -right-[4px] size-[5px] border-l border-t border-white bg-black" />
          </div>
        )}
        <div
          className={clsx(
            "relative h-[14px] overflow-hidden whitespace-pre pl-[2px] leading-[14px]",
            TEXT_SIZE[size],
          )}
        >
          {text}
        </div>
      </td>
      <EmptyCells />
    </tr>
  );
}

function ScrollBar() {
  return (
    <div className="flex w-[19px] shrink-0 flex-col bg-[#dbe0e8]">
      <div className="flex h-[10px] items-center justify-center border border-[#8e939b] bg-white">
        <span className="h-px w-3 bg-[#888]" />
      </div>
      <button aria-label="上へスクロール" className="flex h-5 items-center justify-center">
        <svg width="12" height="6" viewBox="0 0 12 6">
          <path d="M0 6h12L6 0z" fill="#3e444d" />
        </svg>
      </button>
      <div className="flex h-[123px] flex-col items-center justify-center gap-px border border-[#838a95] bg-linear-to-r from-[#f4f6f8] to-[#d5dae2]">
        <span className="h-px w-2 bg-[#777]" />
        <span className="h-px w-2 bg-[#777]" />
        <span className="h-px w-2 bg-[#777]" />
        <span className="h-px w-2 bg-[#777]" />
      </div>
    </div>
  );
}
